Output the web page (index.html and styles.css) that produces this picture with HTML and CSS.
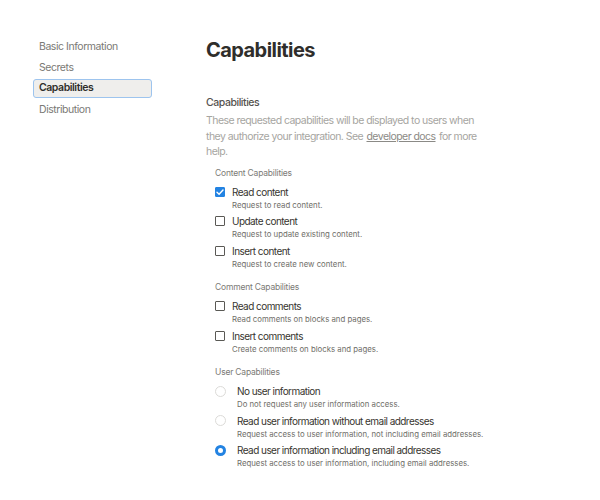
FILE: index.html
```html
<!DOCTYPE html>
<html>
<head>
<meta charset="utf-8">
<link rel="stylesheet" href="styles.css">
</head>
<body>
<div class="page">
  <nav class="sidebar">
    <div class="nav-item">Basic Information</div>
    <div class="nav-item">Secrets</div>
    <div class="nav-item active">Capabilities</div>
    <div class="nav-item">Distribution</div>
  </nav>
  <main class="main">
    <h1 class="title">Capabilities</h1>
    <h2 class="section-title">Capabilities</h2>
    <p class="section-desc">These requested capabilities will be displayed to users when they authorize your integration. See <a class="link">developer docs</a> for more help.</p>

    <div class="group">
      <div class="group-label">Content Capabilities</div>
      <div class="option">
        <span class="check checked"><svg viewBox="0 0 12 12" width="12" height="12"><path d="M2.4 6.3 L4.9 8.6 L9.6 3.5" fill="none" stroke="#fff" stroke-width="1.7" stroke-linecap="round" stroke-linejoin="round"/></svg></span>
        <div class="option-text"><div class="option-label">Read content</div><div class="option-desc">Request to read content.</div></div>
      </div>
      <div class="option">
        <span class="check"></span>
        <div class="option-text"><div class="option-label">Update content</div><div class="option-desc">Request to update existing content.</div></div>
      </div>
      <div class="option">
        <span class="check"></span>
        <div class="option-text"><div class="option-label">Insert content</div><div class="option-desc">Request to create new content.</div></div>
      </div>
    </div>

    <div class="group">
      <div class="group-label">Comment Capabilities</div>
      <div class="option">
        <span class="check"></span>
        <div class="option-text"><div class="option-label">Read comments</div><div class="option-desc">Read comments on blocks and pages.</div></div>
      </div>
      <div class="option">
        <span class="check"></span>
        <div class="option-text"><div class="option-label">Insert comments</div><div class="option-desc">Create comments on blocks and pages.</div></div>
      </div>
    </div>

    <div class="group">
      <div class="group-label">User Capabilities</div>
      <div class="option radio-option">
        <span class="radio"></span>
        <div class="option-text"><div class="option-label">No user information</div><div class="option-desc">Do not request any user information access.</div></div>
      </div>
      <div class="option radio-option">
        <span class="radio"></span>
        <div class="option-text"><div class="option-label">Read user information without email addresses</div><div class="option-desc">Request access to user information, not including email addresses.</div></div>
      </div>
      <div class="option radio-option">
        <span class="radio selected"></span>
        <div class="option-text"><div class="option-label">Read user information including email addresses</div><div class="option-desc">Request access to user information, including email addresses.</div></div>
      </div>
    </div>
  </main>
</div>
</body>
</html>
```
FILE: styles.css
```css
* { box-sizing: border-box; }
html, body { margin: 0; padding: 0; background: #fff; }
body {
  font-family: Inter, "Noto Sans", sans-serif;
  color: #37352f;
  -webkit-font-smoothing: antialiased;
}
.page {
  display: flex;
  padding-top: 37px;
}
.sidebar {
  width: 206px;
  padding-left: 33px;
  display: flex;
  flex-direction: column;
  gap: 2px;
}
.nav-item {
  width: 119px;
  height: 19px;
  line-height: 17px;
  padding: 0 5px;
  border: 1px solid transparent;
  border-radius: 3px;
  font-size: 10.5px;
  letter-spacing: -0.45px;
  color: #7a7975;
}
.nav-item.active {
  background: #efeeec;
  border: 1.5px solid #9dc4ee;
  color: #2f2e2b;
  font-weight: 600;
  line-height: 16px;
}
.main {
  flex: 1;
  padding-top: 1px;
}
.title {
  margin: 0;
  font-size: 20px;
  line-height: 24px;
  font-weight: 700;
  letter-spacing: -0.55px;
  color: #2f2e2b;
}
.section-title {
  margin: 33px 0 0;
  font-size: 10.5px;
  line-height: 16px;
  font-weight: 500;
  letter-spacing: -0.45px;
  color: #55534e;
}
.section-desc {
  margin: 2px 0 0;
  width: 285px;
  font-size: 10.5px;
  line-height: 15.5px;
  letter-spacing: -0.55px;
  color: #a6a5a1;
}
.link {
  display: inline-block;
  margin: 0 1px;
  color: #8b8a86;
  text-decoration: underline;
}
.group {
  margin-top: 6px;
  padding-left: 9px;
}
.group + .group { margin-top: 7px; }
.group-label {
  font-size: 8.5px;
  line-height: 14px;
  letter-spacing: -0.2px;
  color: #7b7a76;
  margin-bottom: 5px;
}
.option {
  display: flex;
  align-items: flex-start;
  gap: 7px;
  height: 29.5px;
}
.check {
  width: 10px;
  height: 10px;
  margin-top: 2px;
  border: 1.5px solid #5a5955;
  border-radius: 1px;
  flex: none;
  display: flex;
  align-items: center;
  justify-content: center;
}
.check.checked {
  background: #2383e2;
  border-color: #2383e2;
}
.check svg { width: 10px; height: 10px; flex: none; }
.option-text { display: flex; flex-direction: column; }
.option-label {
  font-size: 10px;
  line-height: 14px;
  letter-spacing: -0.55px;
  color: #37352f;
}
.option-desc {
  font-size: 7.8px;
  line-height: 12px;
  color: #6f6e69;
}
.radio-option { gap: 11px; }
.radio {
  width: 11px;
  height: 11px;
  margin-top: 1.5px;
  border-radius: 50%;
  border: 1px solid #dcdbd8;
  flex: none;
}
.radio.selected {
  border: 3.5px solid #2383e2;
  background: #fff;
}
```
